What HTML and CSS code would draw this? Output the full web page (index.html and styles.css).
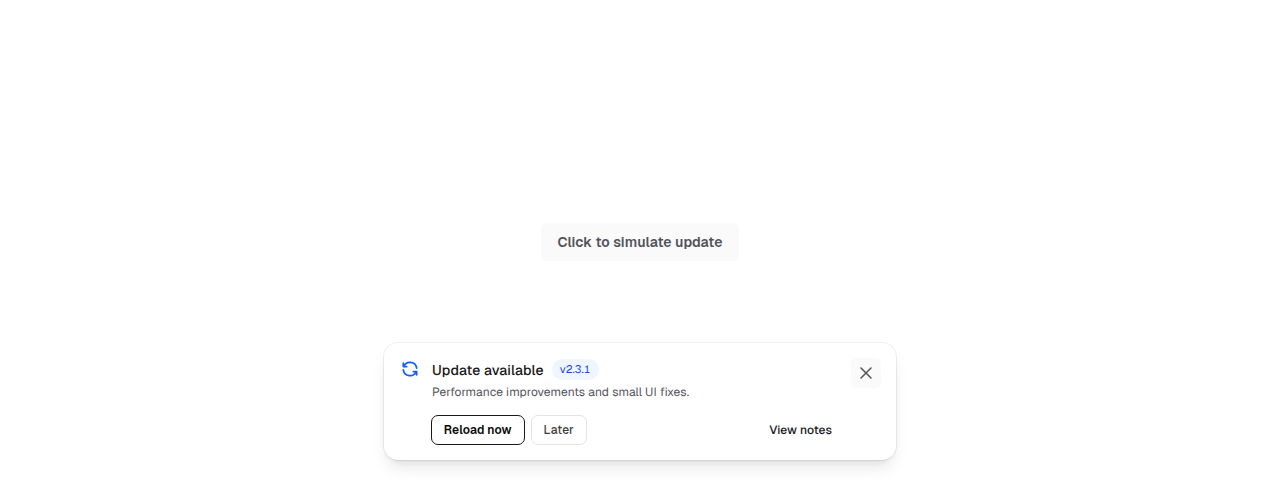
FILE: index.html
```html
<!DOCTYPE html>
<html lang="en">
<head>
<meta charset="utf-8">
<title>Update available</title>
<link rel="stylesheet" href="styles.css">
</head>
<body>
<main class="stage"><button class="trigger">Click to simulate update</button></main>
<section class="toast">
  <svg class="refresh" viewBox="0 0 24 24" fill="none" stroke="currentColor" stroke-width="2.1" stroke-linecap="round" stroke-linejoin="round"><path d="M20 11A8.1 8.1 0 0 0 4.5 9M4 5v4h4"/><path d="M4 13a8.1 8.1 0 0 0 15.5 2m.5 4v-4h-4"/></svg>
  <div class="body">
    <div class="heading"><span class="title">Update available</span><span class="badge">v2.3.1</span></div>
    <p class="desc">Performance improvements and small UI fixes.</p>
    <div class="actions"><button class="btn primary">Reload now</button><button class="btn">Later</button><a class="notes">View notes</a></div>
  </div>
  <button class="close" aria-label="Dismiss"><svg viewBox="0 0 20 20" fill="none" stroke="currentColor" stroke-width="1.5" stroke-linecap="round"><path d="M15 5L5 15M5 5l10 10"/></svg></button>
</section>
</body>
</html>
```
FILE: styles.css
```css
* { box-sizing: border-box; }
body { margin: 0; height: 484px; overflow: hidden; position: relative; background: #fff; font-family: Geist, Inter, "Liberation Sans", sans-serif; text-rendering: geometricPrecision; }
button { font: inherit; margin: 0; padding: 0; border: 0; white-space: nowrap; }
.stage { height: 484px; display: flex; align-items: center; justify-content: center; }
.trigger { width: 198px; height: 38px; border-radius: 6px; background: #fafafa; color: #52525b; font-size: 14px; font-weight: 600; letter-spacing: .05px; }
.toast { position: absolute; left: 384px; bottom: 24px; width: 512px; height: 117px; display: flex; padding: 15px 15px 15px 16px; border-radius: 14px; background: #fff; box-shadow: 0 0 0 1px rgba(0,0,0,.06), 0 10px 15px -3px rgba(0,0,0,.1), 0 4px 6px -4px rgba(0,0,0,.1); }
.refresh { width: 20px; height: 20px; margin-top: 1px; color: #155dfc; flex: none; }
.body { width: 400px; margin-left: 12px; flex: none; }
.heading { display: flex; align-items: center; gap: 8px; height: 22px; }
.title { padding-top: 3px; font-size: 14px; line-height: 20px; font-weight: 500; letter-spacing: .15px; color: #18181b; white-space: nowrap; }
.badge { width: 47px; height: 21px; line-height: 21px; padding: 1px 0 0 8px; border-radius: 11px; background: #eff6ff; color: #1447e6; font-size: 11px; font-variant-numeric: tabular-nums; letter-spacing: .1px; white-space: nowrap; }
.desc { margin: 3px 0 0; font-size: 12px; line-height: 18px; letter-spacing: .09px; color: #52525b; }
.actions { display: flex; align-items: center; gap: 6px; margin: 14px 0 0 -1px; }
.btn { height: 30px; width: 56.5px; border: 1px solid #e4e4e7; border-radius: 7px; background: #fff; color: #3f3f46; font-size: 12px; font-weight: 500; letter-spacing: .15px; }
.primary { width: 93.5px; border-color: #18181b; color: #09090b; font-weight: 600; letter-spacing: .08px; }
.notes { margin-left: auto; font-size: 12px; color: #18181b; font-weight: 500; letter-spacing: .08px; }
.close { width: 30px; height: 30px; margin-left: auto; border-radius: 6px; background: #fafafa; color: #52525b; display: grid; place-items: center; }
.close svg { width: 20px; height: 20px; }
```
